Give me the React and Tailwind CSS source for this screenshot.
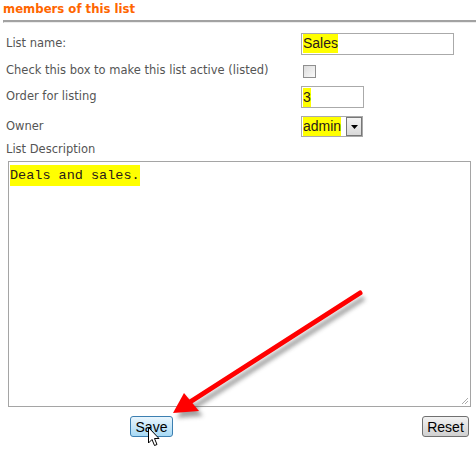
import React from 'react'

const label = "text-[11.5px] text-[#555] font-['DejaVu_Sans',Verdana,sans-serif]"

function Row({ text, h, children }) {
  return (
    <div className="flex items-center" style={{ height: h }}>
      <div className={`w-[301px] shrink-0 pl-[6px] ${label}`}>{text}</div>
      <div className="flex items-center">{children}</div>
    </div>
  )
}

function Hl({ children, mono }) {
  return (
    <span
      className={`bg-[#ffff00] text-[#2a1a1a] ${
        mono
          ? "font-['Liberation_Mono',monospace] text-[13.5px] leading-[21px] inline-block"
          : "font-['Liberation_Sans',Arial,sans-serif] text-[14px] leading-[19px] inline-block"
      }`}
    >
      {children}
    </span>
  )
}

function Arrow() {
  return (
    <svg className="absolute left-0 top-0 pointer-events-none" width="476" height="453">
      <defs>
        <filter id="sh" x="-20%" y="-20%" width="140%" height="140%">
          <feGaussianBlur stdDeviation="2" />
        </filter>
      </defs>
      <g transform="translate(4,5)" filter="url(#sh)" opacity="0.55">
        <line x1="360" y1="293" x2="190" y2="402" stroke="#555" strokeWidth="5" />
        <polygon points="173,413 184,393 199,411" fill="#555" />
      </g>
      <line x1="360" y1="293" x2="190" y2="402" stroke="#ff0000" strokeWidth="5" strokeLinecap="round" />
      <polygon points="173,413 184,393 199,411" fill="#ff0000" />
    </svg>
  )
}

function Cursor() {
  return (
    <svg className="absolute left-[148px] top-[427px] pointer-events-none" width="14" height="22" viewBox="0 0 14 22">
      <path
        d="M0.5 0.5 L0.5 16 L4 12.5 L6.5 18.5 L9 17.5 L6.5 11.5 L11 11.5 Z"
        fill="#fff"
        stroke="#000"
        strokeWidth="1"
        strokeLinejoin="round"
      />
    </svg>
  )
}

export default function App() {
  return (
    <div className="relative w-[476px] h-[453px] bg-white overflow-hidden">
      <div className="pl-[3px] pt-[2px] h-[20px] text-[11.7px] font-bold text-[#ff6600] font-['DejaVu_Sans',Verdana,sans-serif] leading-[15px]">
        members of this list
      </div>
      <div className="ml-[3px] h-[3px] border-t-2 border-l border-[#a2a2a2] border-b border-b-[#ececec]" />
      <div className="h-[9px]" />
      <Row text="List name:" h={23}>
        <div className="w-[153px] h-[22px] border border-[#aaa] flex items-center pl-[1px]">
          <Hl>Sales</Hl>
        </div>
      </Row>
      <div className="h-[8px]" />
      <Row text="Check this box to make this list active (listed)" h={16}>
        <div className="ml-[2px] w-[13px] h-[13px] border border-[#8f8f8f] bg-gradient-to-br from-[#dcdcdc] to-[#fafafa]" />
      </Row>
      <div className="h-[7px]" />
      <Row text="Order for listing" h={22}>
        <div className="w-[63px] h-[22px] border border-[#aaa] flex items-center pl-[1px]">
          <Hl>3</Hl>
        </div>
      </Row>
      <div className="h-[8px]" />
      <Row text="Owner" h={21}>
        <div className="w-[62px] h-[21px] border border-[#aaa] flex items-stretch">
          <div className="flex items-center pl-[1px] bg-white flex-1">
            <Hl>admin</Hl>
          </div>
          <div className="w-[16px] border border-[#777] bg-gradient-to-b from-[#f4f4f4] to-[#d9d9d9] flex items-center justify-center">
            <svg width="7" height="4" viewBox="0 0 7 4">
              <polygon points="0,0 7,0 3.5,4" fill="#000" />
            </svg>
          </div>
        </div>
      </Row>
      <div className="h-[3px]" />
      <div className={`pl-[6px] h-[18px] leading-[18px] ${label}`}>List Description</div>
      <div className="h-[3px]" />
      <div className="ml-[8px] w-[463px] h-[246px] border border-[#a5a5a5] relative pt-[1px] pl-[1px]">
        <div className="leading-[21px]">
          <Hl mono>Deals and sales.</Hl>
        </div>
        <svg className="absolute right-[1px] bottom-[1px]" width="8" height="8" viewBox="0 0 8 8">
          <path d="M7 1 L1 7 M7 4 L4 7" stroke="#aaa" strokeWidth="1" />
        </svg>
      </div>
      <div className="flex justify-between mt-[9px] pl-[130px] pr-[7px]">
        <button className="w-[43px] h-[21px] rounded-[3px] border border-[#3c7fb1] bg-gradient-to-b from-[#eaf6fd] to-[#a7d9f5] text-[14px] text-black font-['Liberation_Sans',Arial,sans-serif] leading-[18px]">
          Save
        </button>
        <button className="w-[47px] h-[21px] rounded-[3px] border border-[#707070] bg-gradient-to-b from-[#f2f2f2] to-[#d0d0d0] text-[14px] text-black font-['Liberation_Sans',Arial,sans-serif] leading-[18px]">
          Reset
        </button>
      </div>
      <Arrow />
      <Cursor />
    </div>
  )
}
